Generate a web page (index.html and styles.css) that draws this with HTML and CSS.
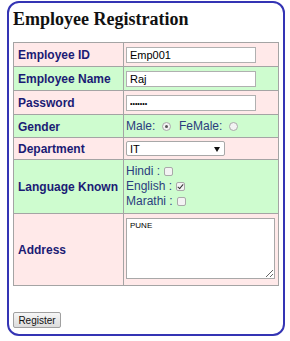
FILE: index.html
```html
<!DOCTYPE html>
<html lang="en">
  <head>
    <meta charset="UTF-8" />
    <title>Employee Registration</title>
    <link rel="stylesheet" href="styles.css">
  </head>
  <body>
    <div class="container">
      <h2>Employee Registration</h2>

      <form id="empForm">
        <table class="reg-table">
          <tr class="row-pink">
            <td class="label">Employee ID</td>
            <td><input type="text" class="field" value="Emp001" /></td>
          </tr>
          <tr class="row-green">
            <td class="label">Employee Name</td>
            <td><input type="text" class="field" value="Raj" /></td>
          </tr>
          <tr class="row-pink">
            <td class="label">Password</td>
            <td><input type="password" class="field pass" value="raj1234" /></td>
          </tr>
          <tr class="row-green">
            <td class="label">Gender</td>
            <td class="value">
              Male: <input type="radio" name="gender" class="radio" checked />
              FeMale: <input type="radio" name="gender" class="radio" />
            </td>
          </tr>
          <tr class="row-pink">
            <td class="label tight">Department</td>
            <td class="tight">
              <span class="select-wrap">
                <select class="dept">
                  <option>IT</option>
                  <option>HR</option>
                  <option>Sales</option>
                </select>
              </span>
            </td>
          </tr>
          <tr class="row-green">
            <td class="label">Language Known</td>
            <td class="value langs">
              Hindi : <input type="checkbox" class="check" /><br />
              English : <input type="checkbox" class="check" checked /><br />
              Marathi : <input type="checkbox" class="check" />
            </td>
          </tr>
          <tr class="row-pink">
            <td class="label">Address</td>
            <td><textarea class="address">PUNE</textarea></td>
          </tr>
        </table>

        <input type="submit" class="btn" value="Register" />
      </form>
    </div>
  </body>
</html>
```

FILE: styles.css
```css
body {
  margin: 1px 0 0 7px;
}

/* Rounded blue box */
.container {
  width: 278px;
  height: 335px;
  border: 2px solid #3434b4;
  border-radius: 12px;
  padding: 0 0 0 4px;
  box-sizing: border-box;
}

h2 {
  font-family: "Liberation Serif", "Times New Roman", serif;
  font-size: 18px;
  font-weight: bold;
  color: #111;
  margin: 0;
  padding-top: 5px;
  line-height: 22px;
  height: 39px;
  box-sizing: border-box;
}

/* Table styles */
.reg-table {
  border-collapse: collapse;
  width: 266px;
  font-family: "Liberation Sans", Arial, sans-serif;
  font-size: 12px;
}
.reg-table td {
  border: 1px solid #a4a4a4;
  padding: 4px 2px 3px 2px;
  vertical-align: middle;
}
.reg-table td.label {
  width: 103px;
  padding-left: 4px;
  font-weight: bold;
  color: #1b1b74;
}
.reg-table td.tight {
  padding-top: 3px;
}
.reg-table td.langs {
  padding-top: 4px;
  padding-bottom: 4px;
}
.row-pink {
  background-color: #ffe9e9;
}
.row-green {
  background-color: #cefccf;
}
.value {
  color: #2b3c7e;
  line-height: 15px;
}

/* Inputs */
.field {
  width: 130px;
  height: 16px;
  box-sizing: border-box;
  border: 1px solid #b0b0b0;
  background: #fff;
  font-family: "Liberation Sans", Arial, sans-serif;
  font-size: 11px;
  padding: 0 3px;
  margin: 0;
  display: block;
}
.pass {
  font-size: 7px;
}
.select-wrap {
  position: relative;
  display: block;
  width: 99px;
}
.dept {
  appearance: none;
  width: 99px;
  height: 15px;
  display: block;
  box-sizing: border-box;
  border: 1px solid #a8a8a8;
  border-radius: 2px;
  background: #fff;
  font-family: "Liberation Sans", Arial, sans-serif;
  font-size: 11px;
  padding: 0 3px;
  margin: 0;
}
.select-wrap::after {
  content: "";
  position: absolute;
  right: 5px;
  top: 6px;
  border-left: 3px solid transparent;
  border-right: 3px solid transparent;
  border-top: 5px solid #111;
}

.radio,
.check {
  appearance: none;
  width: 9px;
  height: 9px;
  margin: 0 5px 0 3px;
  border: 1px solid #a9a9a9;
  background: #f3f3f3;
  vertical-align: -1px;
  position: relative;
}
.radio {
  border-radius: 50%;
}
.radio:checked::after {
  content: "";
  position: absolute;
  left: 2px;
  top: 2px;
  width: 3px;
  height: 3px;
  border-radius: 50%;
  background: #555;
}
.check {
  border-radius: 2px;
  margin-left: 1px;
}
.check:checked::after {
  content: "";
  position: absolute;
  left: 2px;
  top: 0px;
  width: 2px;
  height: 5px;
  border: solid #333;
  border-width: 0 1.5px 1.5px 0;
  transform: rotate(40deg);
}

.address {
  width: 149px;
  height: 61px;
  box-sizing: border-box;
  border: 1px solid #a8a8a8;
  font-family: "Liberation Sans", Arial, sans-serif;
  font-size: 8px;
  padding: 2px 3px;
  margin: 0 0 3px 0;
  display: block;
  resize: both;
}

/* Register button */
.btn {
  display: block;
  margin-top: 26px;
  width: 48px;
  height: 16px;
  padding: 0;
  font-family: "Liberation Sans", Arial, sans-serif;
  font-size: 10px;
  color: #111;
  border: 1px solid #a0a0a0;
  border-radius: 2px;
  background: linear-gradient(#f6f6f6, #dcdcdc);
}
```
